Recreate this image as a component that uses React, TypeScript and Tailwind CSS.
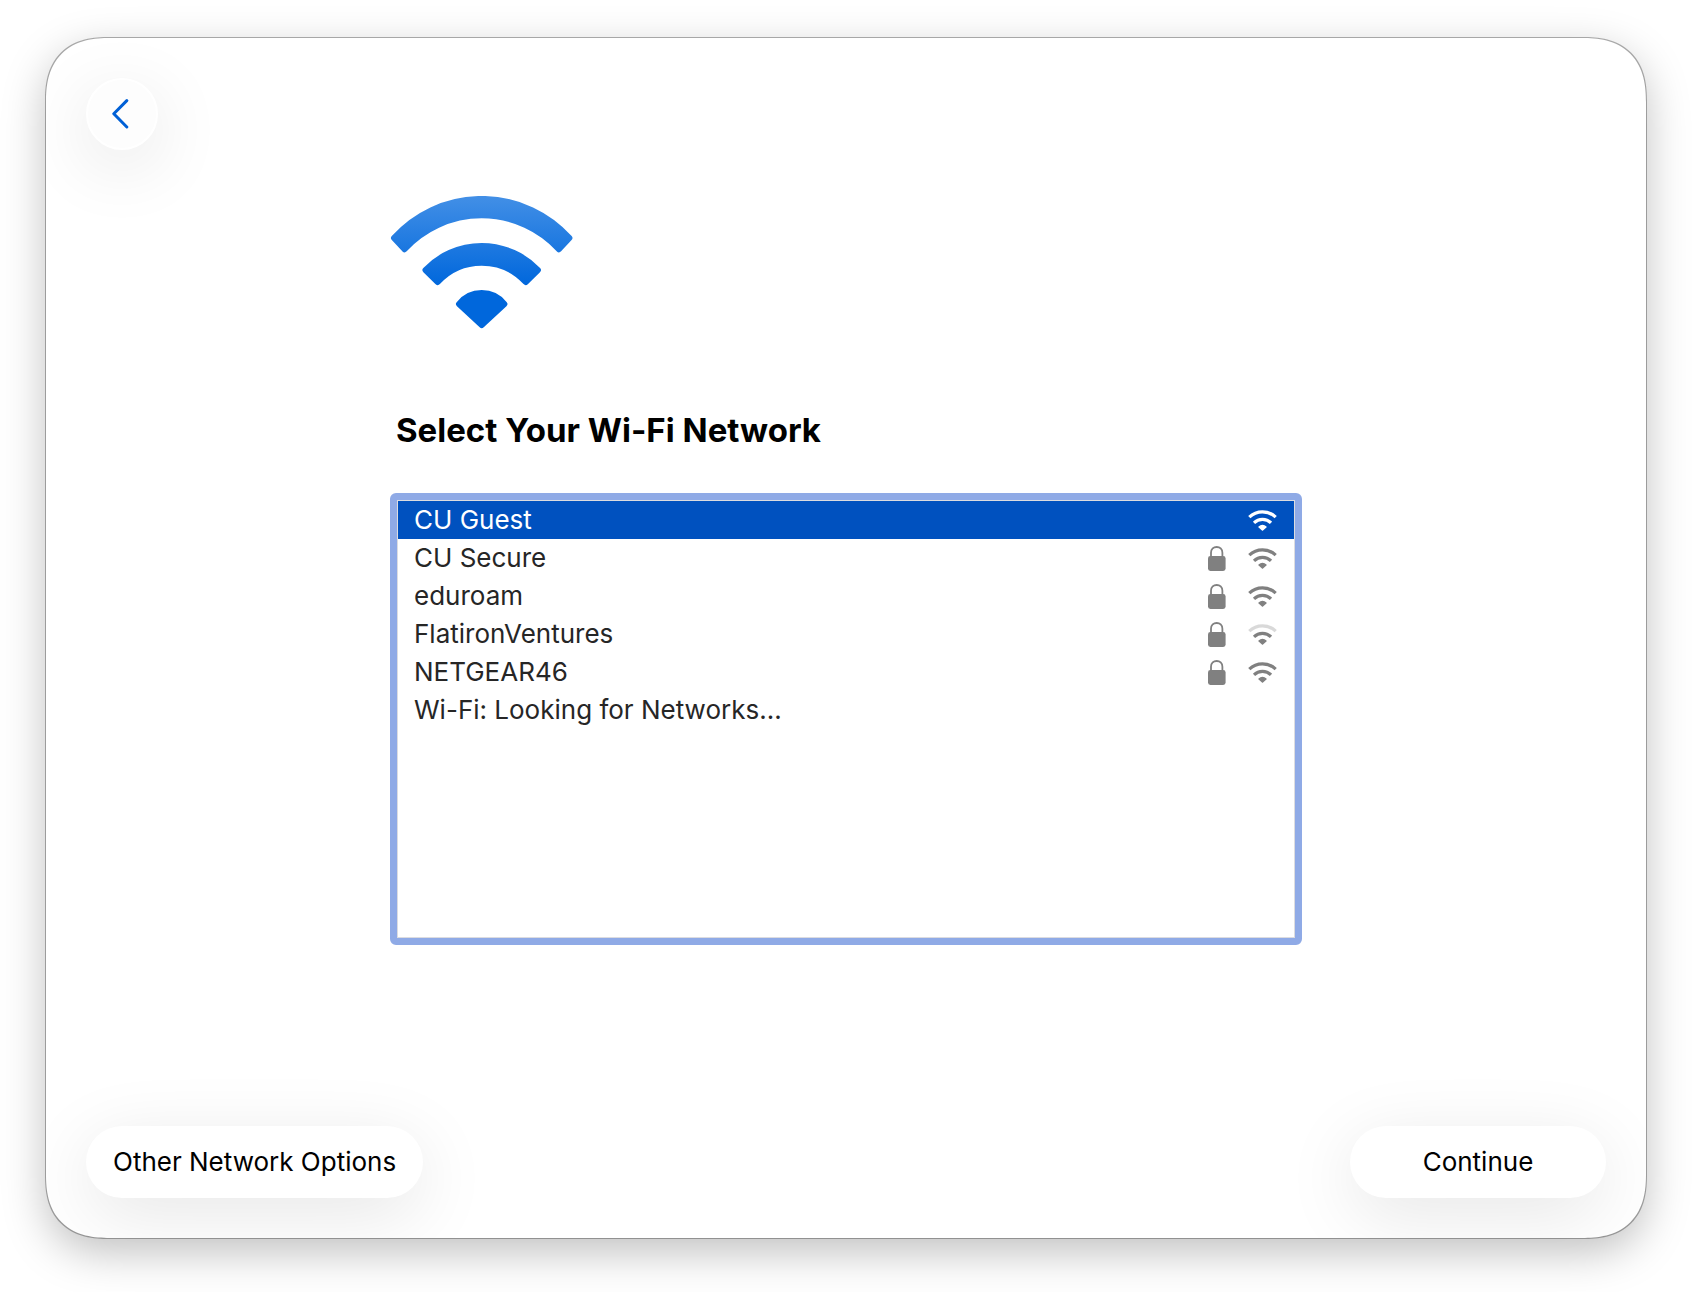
import { clsx } from "clsx";
import { useState } from "react";

type Network = {
  name: string;
  secure: boolean;
  strength: 1 | 2 | 3;
};

const networks: Network[] = [
  { name: "CU Guest", secure: false, strength: 3 },
  { name: "CU Secure", secure: true, strength: 3 },
  { name: "eduroam", secure: true, strength: 3 },
  { name: "FlatironVentures", secure: true, strength: 2 },
  { name: "NETGEAR46", secure: true, strength: 3 },
];

function WifiLogo() {
  return (
    <svg
      width="184"
      height="133"
      viewBox="0 0 184 133"
      strokeWidth="6"
      strokeLinejoin="round"
      fill="url(#wifi-gradient)"
      stroke="url(#wifi-gradient)"
      aria-hidden="true"
    >
      <defs>
        <linearGradient
          id="wifi-gradient"
          gradientUnits="userSpaceOnUse"
          x1="0"
          y1="0"
          x2="0"
          y2="90"
        >
          <stop offset="0" stopColor="#428fe6" />
          <stop offset="1" stopColor="#0067dc" />
        </linearGradient>
      </defs>
      <path d="M4 42A118 118 0 0 1 179.4 42L168.9 53.2A105 105 0 0 0 14.5 53.2Z" />
      <path d="M35.5 74A77.8 77.8 0 0 1 147.9 74L135.7 86A59.8 59.8 0 0 0 47.7 86Z" />
      <path d="M69 108A28.9 28.9 0 0 1 114.4 108L91.7 129Z" />
    </svg>
  );
}

function WifiIcon({ strength }: { strength: number }) {
  return (
    <svg
      width="29"
      height="22"
      viewBox="0 0 29 22"
      fill="none"
      stroke="currentColor"
      strokeWidth="3.2"
      aria-hidden="true"
    >
      <path
        d="M1.3 8.2A19 19 0 0 1 27.7 8.2"
        className={clsx(strength < 3 && "opacity-30")}
      />
      <path
        d="M6 13.8A12.2 12.2 0 0 1 23 13.8"
        className={clsx(strength < 2 && "opacity-30")}
      />
      <path
        d="M11.1 18A5 5 0 0 1 17.9 18L14.5 21Z"
        fill="currentColor"
        strokeWidth="1.6"
        strokeLinejoin="round"
      />
    </svg>
  );
}

function LockIcon() {
  return (
    <svg width="18" height="25" viewBox="0 0 18 25" aria-hidden="true">
      <path
        d="M3 11V6.8C3 3 5.6 1 8.7 1C11.8 1 14.4 3 14.4 6.8V11"
        fill="none"
        stroke="currentColor"
        strokeWidth="1.8"
      />
      <rect y="10" width="17.6" height="15" rx="2.4" fill="currentColor" />
    </svg>
  );
}

function NetworkRow({
  network,
  selected,
  onSelect,
}: {
  network: Network;
  selected: boolean;
  onSelect: () => void;
}) {
  return (
    <button
      type="button"
      role="option"
      aria-selected={selected}
      onClick={onSelect}
      className={clsx(
        "flex h-[38px] w-full items-center gap-[22px] pr-[17px] pl-4 text-left outline-none",
        selected ? "bg-[#0051bf] text-white" : "text-[#808080]"
      )}
    >
      <span className={clsx("flex-1", !selected && "text-[#262626]")}>
        {network.name}
      </span>
      {network.secure && <LockIcon />}
      <WifiIcon strength={network.strength} />
    </button>
  );
}

export default function App() {
  const [selected, setSelected] = useState("CU Guest");

  return (
    <div className="flex min-h-screen bg-white px-[46px] pt-[38px] pb-[54px] font-['Inter',sans-serif] text-[26px] leading-[38px] text-black">
      <main className="flex flex-1 flex-col overflow-hidden rounded-[64px] bg-white p-10 shadow-[0_0_0_1px_rgba(0,0,0,0.3),0_14px_44px_rgba(0,0,0,0.25)] [corner-shape:superellipse(1.3)]">
        <button
          type="button"
          aria-label="Back"
          className="flex size-[72px] items-center justify-center rounded-full border-2 border-white bg-[#fdfdfd] text-[#0060d6] shadow-[0_16px_72px_rgba(0,0,0,0.11)]"
        >
          <svg
            width="20"
            height="32"
            viewBox="0 0 20 32"
            fill="none"
            stroke="currentColor"
            strokeWidth="3"
            strokeLinecap="round"
            strokeLinejoin="round"
            aria-hidden="true"
          >
            <path d="M14.8 2.6L1.8 15.8L14.8 29" />
          </svg>
        </button>

        <section className="mx-auto mt-[46px] w-full max-w-[912px]">
          <WifiLogo />
          <h1
            id="network-heading"
            className="mt-[81px] pl-1.5 text-[33px] leading-10 font-bold"
          >
            Select Your Wi-Fi Network
          </h1>
          <div className="mt-[43px] rounded-md border-[7px] border-[#8faae6] bg-white">
            <div className="min-h-[438px] border border-[#dcdce0]">
              <div role="listbox" aria-labelledby="network-heading">
                {networks.map((network) => (
                  <NetworkRow
                    key={network.name}
                    network={network}
                    selected={network.name === selected}
                    onSelect={() => setSelected(network.name)}
                  />
                ))}
              </div>
              <p className="px-4 text-[#262626]">
                Wi-Fi: Looking for Networks…
              </p>
            </div>
          </div>
        </section>

        <footer className="mt-auto flex items-center justify-between">
          <button
            type="button"
            className="h-[72px] rounded-full bg-white px-[27px] shadow-[0_16px_72px_rgba(0,0,0,0.1)]"
          >
            Other Network Options
          </button>
          <button
            type="button"
            className="h-[72px] w-64 rounded-full bg-white shadow-[0_16px_72px_rgba(0,0,0,0.1)]"
          >
            Continue
          </button>
        </footer>
      </main>
    </div>
  );
}
